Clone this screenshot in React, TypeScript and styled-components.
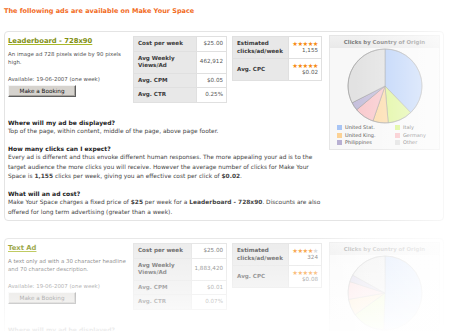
import React from "react";
import styled, { createGlobalStyle } from "styled-components";

const GlobalStyle = createGlobalStyle`
  html, body { margin: 0; padding: 0; background: #fff; }
  body { font-family: "DejaVu Sans", Verdana, sans-serif; color: #444; }
  * { box-sizing: border-box; }
`;

const Page = styled.div`
  position: relative;
  width: 450px;
  height: 331px;
  overflow: hidden;
  padding: 7px 4px 0 4px;
`;

const PageTitle = styled.h1`
  margin: 0;
  font-size: 6.5px;
  line-height: 9px;
  font-weight: bold;
  color: #f26b1d;
`;

const Card = styled.section<{ $mt: number }>`
  display: flex;
  gap: 7px;
  align-items: flex-start;
  margin-top: ${(p) => p.$mt}px;
  width: 440px;
  border: 1px solid #e4e4e4;
  border-radius: 4px;
  padding: 4px 3px 3px 3px;
  background: #fff;
`;

const Main = styled.div`
  width: 314px;
  display: flex;
  flex-direction: column;
`;

const TopRow = styled.div`
  display: flex;
  align-items: flex-start;
`;

const Info = styled.div`
  width: 121px;
  margin-right: 4px;
  display: flex;
  flex-direction: column;
  align-items: flex-start;
`;

const AdTitle = styled.a`
  display: block;
  font-size: 6.8px;
  line-height: 10px;
  font-weight: bold;
  color: #7f8f12;
  text-decoration: underline;
  text-decoration-color: #a9b82a;
  cursor: pointer;
`;

const Desc = styled.p`
  margin: 4px 0 0 0;
  font-size: 5.45px;
  line-height: 8px;
  color: #555;
`;

const Avail = styled.div`
  margin-top: 9px;
  font-size: 5.45px;
  line-height: 8px;
  color: #555;
`;

const BookButton = styled.button`
  margin-top: 2px;
  width: 68px;
  height: 12px;
  padding: 0;
  font-family: inherit;
  font-size: 5.7px;
  line-height: 10px;
  color: #111;
  background: #d6d3ce;
  border: 1px solid;
  border-color: #f4f4f4 #5e5e5e #5e5e5e #f4f4f4;
  box-shadow: inset -1px -1px 0 #a8a5a0;
`;

const StatTable = styled.table<{ $w: number; $mr?: number }>`
  width: ${(p) => p.$w}px;
  margin-right: ${(p) => p.$mr ?? 0}px;
  border-collapse: collapse;
  font-size: 5.6px;
  line-height: 7.5px;
  td, th { border: 1px solid #e0e0e0; }
`;

const Label = styled.th<{ $w: number }>`
  width: ${(p) => p.$w}px;
  background: #e8e8e8;
  font-weight: bold;
  color: #3a3a3a;
  text-align: left;
  vertical-align: middle;
  padding: 3px 3px 3px 4px;
`;

const Value = styled.td`
  background: #fff;
  text-align: right;
  vertical-align: middle;
  color: #555;
  padding: 3px 3px;
`;

const Stars = styled.div`
  color: #f68a12;
  font-size: 6.3px;
  line-height: 7px;
  letter-spacing: -0.5px;
  white-space: nowrap;
`;

const DimStar = styled.span`
  color: #c9c9c9;
`;

const Faq = styled.div`
  margin-top: 15px;
  font-size: 5.9px;
  line-height: 9.5px;
  color: #444;
`;

const FaqItem = styled.div`
  & + & { margin-top: 7px; }
`;

const FaqQ = styled.h3`
  margin: 0;
  font-size: 6px;
  line-height: 9.5px;
  font-weight: bold;
  color: #222;
`;

const FaqA = styled.p`
  margin: 0;
`;

const ChartPanel = styled.div`
  width: 111px;
  height: 115px;
  margin-top: -1px;
  border: 1px solid #e6e6e6;
  background: #f8f8f8;
  display: flex;
  flex-direction: column;
`;

const ChartTitle = styled.div`
  height: 12px;
  line-height: 12px;
  font-size: 5.4px;
  font-weight: bold;
  color: #7a7a7a;
  text-align: center;
  background: linear-gradient(#f1f1f1, #e9e9e9);
`;

const PieSvg = styled.svg`
  display: block;
  width: 109px;
  height: 76px;
`;

const Legend = styled.div`
  display: grid;
  grid-template-columns: 58px 1fr;
  padding-left: 7px;
  font-size: 5px;
  line-height: 7.5px;
  color: #555;
`;

const LegendItem = styled.div`
  display: flex;
  align-items: center;
  white-space: nowrap;
`;

const Swatch = styled.span<{ $c: string }>`
  width: 5px;
  height: 5px;
  margin-right: 3px;
  background: ${(p) => p.$c};
`;

const BottomFade = styled.div`
  position: absolute;
  left: 0;
  right: 0;
  top: 226px;
  bottom: 0;
  pointer-events: none;
  background:
    linear-gradient(to right, rgba(255,255,255,0) 68%, rgba(255,255,255,0.55) 80%, rgba(255,255,255,0.6)),
    linear-gradient(to bottom, rgba(255,255,255,0.05), rgba(255,255,255,0.92));
`;

const RightFade = styled.div`
  position: absolute;
  top: 0;
  bottom: 0;
  right: 0;
  width: 95px;
  pointer-events: none;
  background: linear-gradient(to right, rgba(255,255,255,0), rgba(255,255,255,0.75));
`;

const COLORS = {
  us: { fill: "#bad1f8", legend: "#a8c5f5" },
  it: { fill: "#dff59a", legend: "#d8f585" },
  uk: { fill: "#fddcab", legend: "#fcd295" },
  de: { fill: "#f9c9cd", legend: "#f8bfc4" },
  ph: { fill: "#c6c0dc", legend: "#b8b0d2" },
  ot: { fill: "#e2e2e2", legend: "#dedede" },
};

function arcPath(cx: number, cy: number, r: number, a0: number, a1: number) {
  const rad = (a: number) => ((a - 90) * Math.PI) / 180;
  const x0 = cx + r * Math.cos(rad(a0));
  const y0 = cy + r * Math.sin(rad(a0));
  const x1 = cx + r * Math.cos(rad(a1));
  const y1 = cy + r * Math.sin(rad(a1));
  const large = a1 - a0 > 180 ? 1 : 0;
  return `M${cx},${cy} L${x0.toFixed(2)},${y0.toFixed(2)} A${r},${r} 0 ${large} 1 ${x1.toFixed(2)},${y1.toFixed(2)} Z`;
}

function Pie({ bounds }: { bounds: number[] }) {
  const keys: (keyof typeof COLORS)[] = ["us", "it", "uk", "de", "ph", "ot"];
  const cx = 55;
  const cy = 38;
  const r = 37;
  return (
    <PieSvg viewBox="0 0 109 76">
      {keys.map((k, i) => (
        <path
          key={k}
          d={arcPath(cx, cy, r, bounds[i], bounds[i + 1])}
          fill={COLORS[k].fill}
          stroke="#9a9a9a"
          strokeWidth={0.5}
          strokeLinejoin="round"
        />
      ))}
      <circle cx={cx} cy={cy} r={r} fill="none" stroke="#a5a5a5" strokeWidth={0.6} />
    </PieSvg>
  );
}

function Chart({ bounds }: { bounds: number[] }) {
  const items: [string, string][] = [
    ["United Stat.", COLORS.us.legend],
    ["Italy", COLORS.it.legend],
    ["United King.", COLORS.uk.legend],
    ["Germany", COLORS.de.legend],
    ["Philippines", COLORS.ph.legend],
    ["Other", COLORS.ot.legend],
  ];
  return (
    <ChartPanel>
      <ChartTitle>Clicks by Country of Origin</ChartTitle>
      <Pie bounds={bounds} />
      <Legend>
        {items.map(([n, c]) => (
          <LegendItem key={n}>
            <Swatch $c={c} />
            {n}
          </LegendItem>
        ))}
      </Legend>
    </ChartPanel>
  );
}

function StarRow({ on }: { on: number }) {
  return (
    <Stars>
      {"★".repeat(on)}
      <DimStar>{"★".repeat(5 - on)}</DimStar>
    </Stars>
  );
}

type Ad = {
  title: string;
  desc: string;
  cost: string;
  views: string;
  cpm: string;
  ctr: string;
  clicks: string;
  clickStars: number;
  cpc: string;
  cpcStars: number;
  bounds: number[];
  mt: number;
};

function AdCard({ ad }: { ad: Ad }) {
  return (
    <Card $mt={ad.mt}>
      <Main>
        <TopRow>
          <Info>
            <AdTitle>{ad.title}</AdTitle>
            <Desc>{ad.desc}</Desc>
            <Avail>Available: 19-06-2007 (one week)</Avail>
            <BookButton>Make a Booking</BookButton>
          </Info>
          <StatTable $w={94} $mr={5}>
            <tbody>
              <tr>
                <Label $w={63}>Cost per week</Label>
                <Value>{ad.cost}</Value>
              </tr>
              <tr>
                <Label $w={63}>Avg Weekly Views/Ad</Label>
                <Value>{ad.views}</Value>
              </tr>
              <tr>
                <Label $w={63}>Avg. CPM</Label>
                <Value>{ad.cpm}</Value>
              </tr>
              <tr>
                <Label $w={63}>Avg. CTR</Label>
                <Value>{ad.ctr}</Value>
              </tr>
            </tbody>
          </StatTable>
          <StatTable $w={90}>
            <tbody>
              <tr>
                <Label $w={59}>Estimated clicks/ad/week</Label>
                <Value>
                  <StarRow on={ad.clickStars} />
                  {ad.clicks}
                </Value>
              </tr>
              <tr>
                <Label $w={59}>Avg. CPC</Label>
                <Value>
                  <StarRow on={ad.cpcStars} />
                  {ad.cpc}
                </Value>
              </tr>
            </tbody>
          </StatTable>
        </TopRow>
        <Faq>
          <FaqItem>
            <FaqQ>Where will my ad be displayed?</FaqQ>
            <FaqA>Top of the page, within content, middle of the page, above page footer.</FaqA>
          </FaqItem>
          <FaqItem>
            <FaqQ>How many clicks can I expect?</FaqQ>
            <FaqA>
              Every ad is different and thus envoke different human responses. The more appealing your ad is to the
              target audience the more clicks you will receive. However the average number of clicks for Make Your Space
              is <b>{ad.clicks}</b> clicks per week, giving you an effective cost per click of <b>{ad.cpc}</b>.
            </FaqA>
          </FaqItem>
          <FaqItem>
            <FaqQ>What will an ad cost?</FaqQ>
            <FaqA>
              Make Your Space charges a fixed price of <b>$25</b> per week for a <b>{ad.title}</b>. Discounts are also
              offered for long term advertising (greater than a week).
            </FaqA>
          </FaqItem>
        </Faq>
      </Main>
      <Chart bounds={ad.bounds} />
    </Card>
  );
}

const ADS: Ad[] = [
  {
    title: "Leaderboard - 728x90",
    desc: "An image ad 728 pixels wide by 90 pixels high.",
    cost: "$25.00",
    views: "462,912",
    cpm: "$0.05",
    ctr: "0.25%",
    clicks: "1,155",
    clickStars: 5,
    cpc: "$0.02",
    cpcStars: 5,
    bounds: [0, 136, 175, 199, 230, 243, 360],
    mt: 15,
  },
  {
    title: "Text Ad",
    desc: "A text only ad with a 30 character headline and 70 character description.",
    cost: "$25.00",
    views: "1,883,420",
    cpm: "$0.01",
    ctr: "0.07%",
    clicks: "324",
    clickStars: 4,
    cpc: "$0.08",
    cpcStars: 5,
    bounds: [0, 182, 234, 260, 288, 299, 360],
    mt: 17,
  },
];

export default function App() {
  return (
    <>
      <GlobalStyle />
      <Page>
        <PageTitle>The following ads are available on Make Your Space</PageTitle>
        {ADS.map((ad) => (
          <AdCard key={ad.title} ad={ad} />
        ))}
        <BottomFade />
        <RightFade />
      </Page>
    </>
  );
}
